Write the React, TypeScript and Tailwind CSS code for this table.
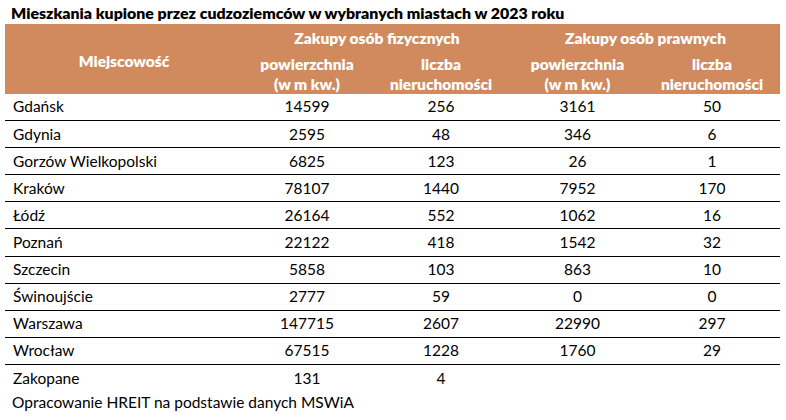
const rows: [string, string, string, string, string][] = [
  ['Gdańsk', '14599', '256', '3161', '50'],
  ['Gdynia', '2595', '48', '346', '6'],
  ['Gorzów Wielkopolski', '6825', '123', '26', '1'],
  ['Kraków', '78107', '1440', '7952', '170'],
  ['Łódź', '26164', '552', '1062', '16'],
  ['Poznań', '22122', '418', '1542', '32'],
  ['Szczecin', '5858', '103', '863', '10'],
  ['Świnoujście', '2777', '59', '0', '0'],
  ['Warszawa', '147715', '2607', '22990', '297'],
  ['Wrocław', '67515', '1228', '1760', '29'],
]

const cols = 'grid grid-cols-[238px_128px_140px_133px_136px]'

export default function App() {
  return (
    <div className="w-[786px] h-[420px] bg-white text-black font-['Lato',sans-serif] text-[15.5px]">
      <div className="h-[24px] pl-[11px] pt-[3px] text-[15.9px] leading-[20px] font-extrabold">
        Mieszkania kupione przez cudzoziemców w wybranych miastach w 2023 roku
      </div>

      <div className="ml-[5px] w-[775px]">
        <div className={`${cols} grid-rows-[30px_40px] bg-[#d08a5e] text-white font-extrabold`}>
          <div className="row-span-2 flex items-center justify-center pt-[6px]">Miejscowość</div>
          <div className="col-span-2 flex items-center justify-center">Zakupy osób fizycznych</div>
          <div className="col-span-2 flex items-center justify-center">Zakupy osób prawnych</div>
          <HeadCell top="powierzchnia" bottom="(w m kw.)" />
          <HeadCell top="liczba" bottom="nieruchomości" />
          <HeadCell top="powierzchnia" bottom="(w m kw.)" />
          <HeadCell top="liczba" bottom="nieruchomości" />
        </div>

        {rows.map((r) => (
          <Row key={r[0]} cells={r} border />
        ))}
        <Row cells={['Zakopane', '131', '4', '', '']} />
      </div>

      <div className="pl-[12px] h-[20px] leading-[20px]">Opracowanie HREIT na podstawie danych MSWiA</div>
    </div>
  )
}

function HeadCell({ top, bottom }: { top: string; bottom: string }) {
  return (
    <div className="flex flex-col items-center leading-[20px]">
      <span>{top}</span>
      <span>{bottom}</span>
    </div>
  )
}

function Row({ cells, border }: { cells: string[]; border?: boolean }) {
  return (
    <div className={`${cols} h-[27.1px] items-center ${border ? 'border-b border-black' : ''}`}>
      <div className="pl-[8px]">{cells[0]}</div>
      {cells.slice(1).map((c, i) => (
        <div key={i} className="text-center">
          {c}
        </div>
      ))}
    </div>
  )
}
